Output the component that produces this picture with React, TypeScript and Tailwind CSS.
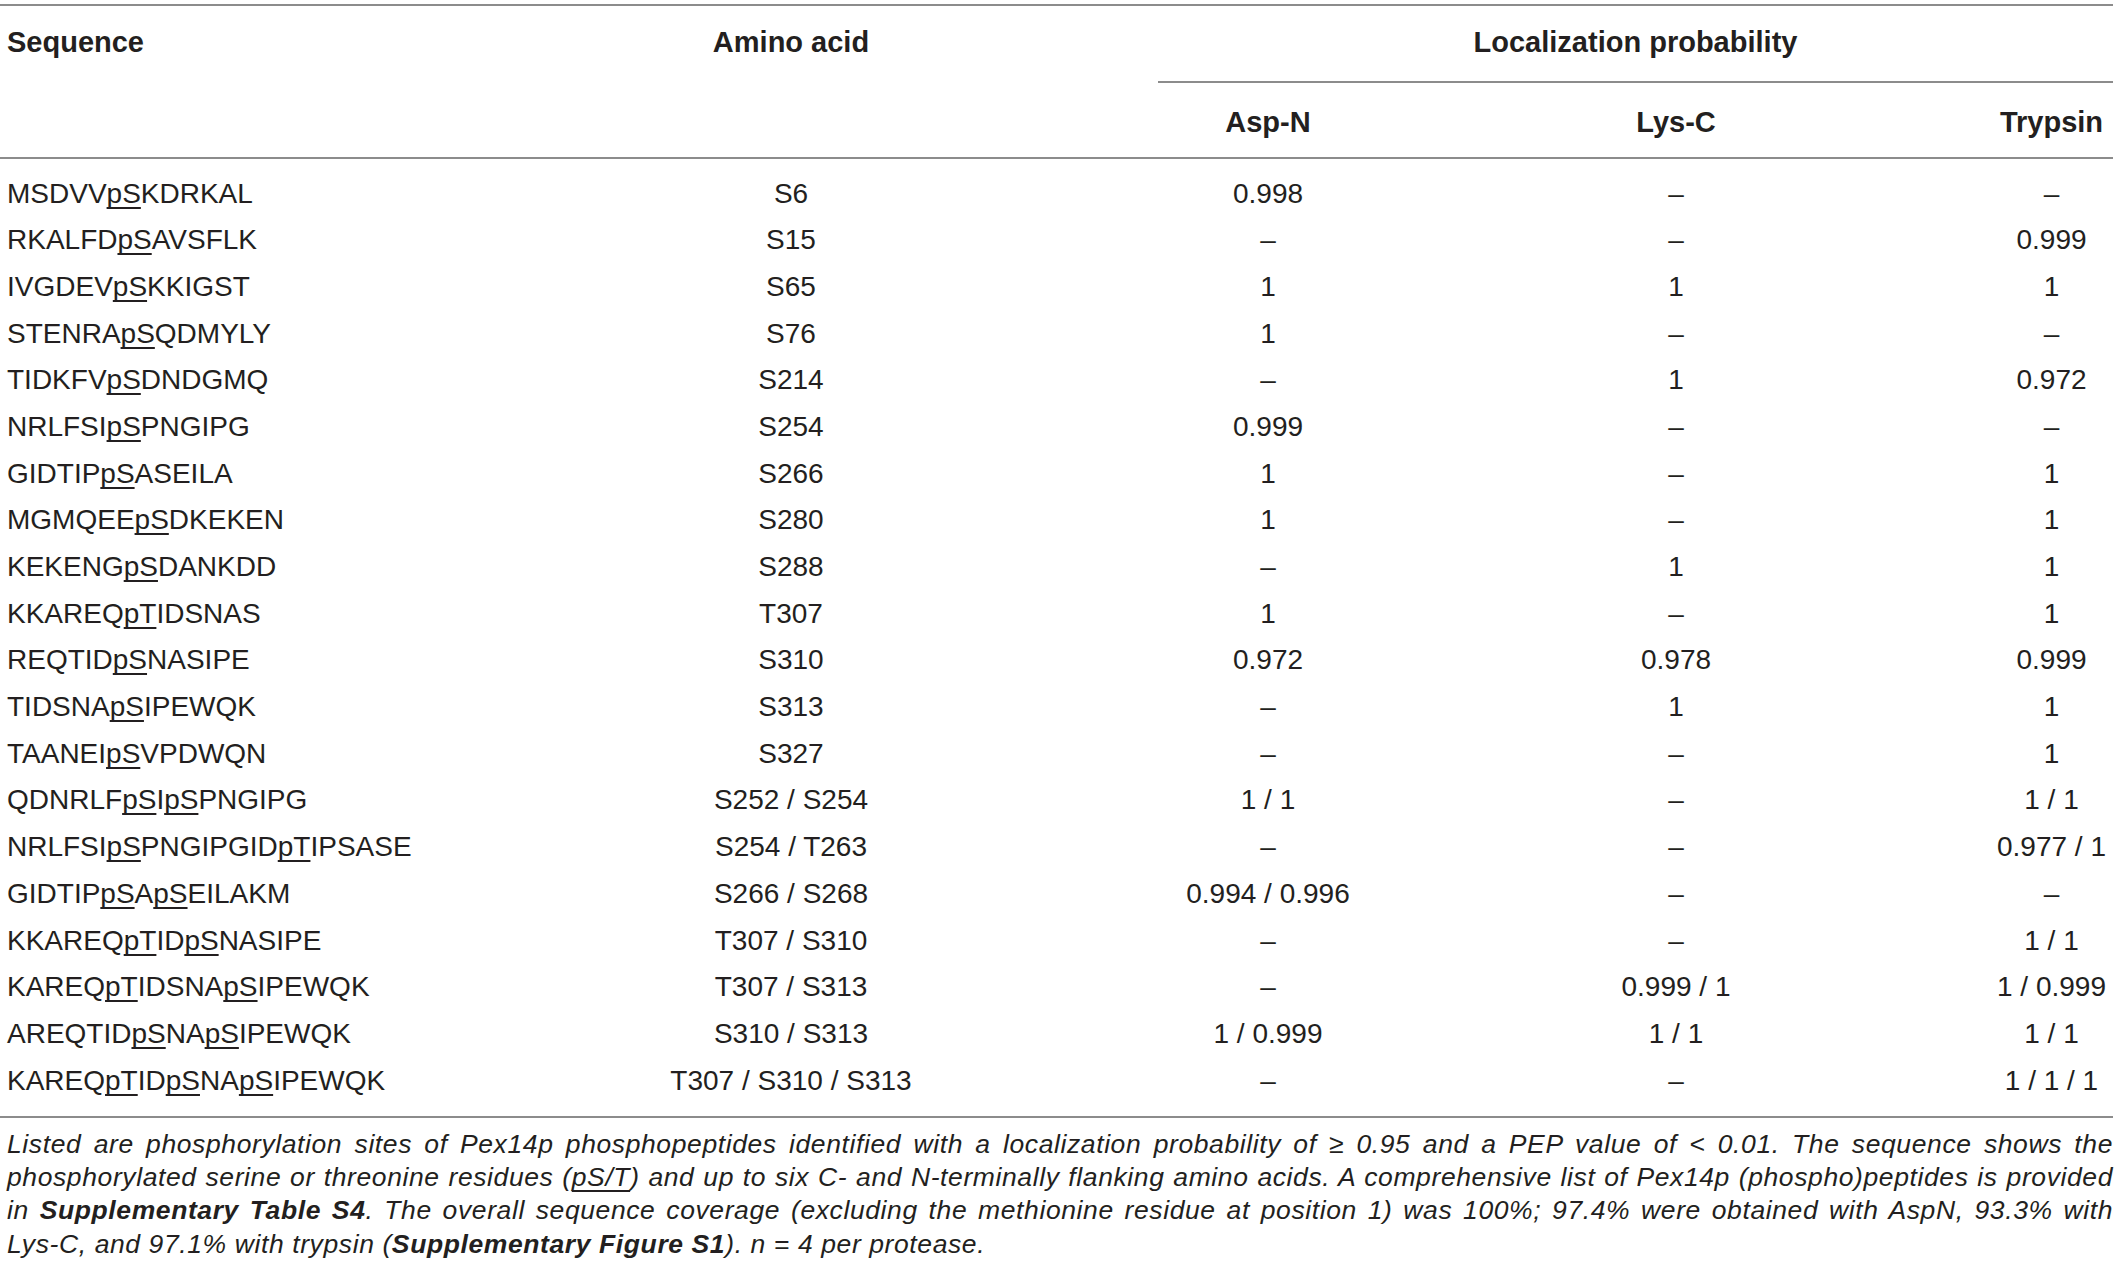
const rows: string[][] = [
  ["MSDVV[pS]KDRKAL", "S6", "0.998", "–", "–"],
  ["RKALFD[pS]AVSFLK", "S15", "–", "–", "0.999"],
  ["IVGDEV[pS]KKIGST", "S65", "1", "1", "1"],
  ["STENRA[pS]QDMYLY", "S76", "1", "–", "–"],
  ["TIDKFV[pS]DNDGMQ", "S214", "–", "1", "0.972"],
  ["NRLFSI[pS]PNGIPG", "S254", "0.999", "–", "–"],
  ["GIDTIP[pS]ASEILA", "S266", "1", "–", "1"],
  ["MGMQEE[pS]DKEKEN", "S280", "1", "–", "1"],
  ["KEKENG[pS]DANKDD", "S288", "–", "1", "1"],
  ["KKAREQ[pT]IDSNAS", "T307", "1", "–", "1"],
  ["REQTID[pS]NASIPE", "S310", "0.972", "0.978", "0.999"],
  ["TIDSNA[pS]IPEWQK", "S313", "–", "1", "1"],
  ["TAANEI[pS]VPDWQN", "S327", "–", "–", "1"],
  ["QDNRLF[pS]I[pS]PNGIPG", "S252 / S254", "1 / 1", "–", "1 / 1"],
  ["NRLFSI[pS]PNGIPGID[pT]IPSASE", "S254 / T263", "–", "–", "0.977 / 1"],
  ["GIDTIP[pS]A[pS]EILAKM", "S266 / S268", "0.994 / 0.996", "–", "–"],
  ["KKAREQ[pT]ID[pS]NASIPE", "T307 / S310", "–", "–", "1 / 1"],
  ["KAREQ[pT]IDSNA[pS]IPEWQK", "T307 / S313", "–", "0.999 / 1", "1 / 0.999"],
  ["AREQTID[pS]NA[pS]IPEWQK", "S310 / S313", "1 / 0.999", "1 / 1", "1 / 1"],
  ["KAREQ[pT]ID[pS]NA[pS]IPEWQK", "T307 / S310 / S313", "–", "–", "1 / 1 / 1"],
];

function Seq({ text }: { text: string }) {
  const parts = text.split(/(\[[^\]]+\])/).filter(Boolean);
  return (
    <>
      {parts.map((p, i) =>
        p.startsWith("[") ? (
          <span
            key={i}
            className="underline decoration-[1.5px] underline-offset-[4px] [text-decoration-skip-ink:none]"
          >
            {p.slice(1, -1)}
          </span>
        ) : (
          <span key={i}>{p}</span>
        )
      )}
    </>
  );
}

export default function App() {
  return (
    <div className="min-h-screen bg-white font-['Liberation_Sans',Arial,sans-serif] text-[#231f20]">
      <div className="w-[2113px] pt-[4px]">
        {/* header */}
        <div className="grid grid-cols-[408px_766px_188px_628px_123px] grid-rows-[77px_74px] border-y-2 border-[#8c8c8c] text-[29px] font-bold">
          <div className="flex items-center pb-[3px] pl-[7px]">Sequence</div>
          <div className="flex items-center justify-center pb-[3px]">Amino acid</div>
          <div className="col-span-3 -ml-[16px] flex items-center justify-center border-b-2 border-[#8c8c8c] pb-[1px]">
            Localization probability
          </div>
          <div className="col-start-3 flex items-center justify-center pt-[6px]">Asp-N</div>
          <div className="flex items-center justify-center pt-[6px]">Lys-C</div>
          <div className="flex items-center justify-center pt-[6px]">Trypsin</div>
        </div>

        {/* body */}
        <div className="border-b-2 border-[#8c8c8c] py-[11.5px] text-[28px]">
          {rows.map((r) => (
            <div
              key={r[0]}
              className="grid h-[46.7px] grid-cols-[408px_766px_188px_628px_123px] leading-[46.7px]"
            >
              <div className="whitespace-nowrap pl-[7px]">
                <Seq text={r[0]} />
              </div>
              <div className="whitespace-nowrap text-center">{r[1]}</div>
              <div className="whitespace-nowrap text-center">{r[2]}</div>
              <div className="whitespace-nowrap text-center">{r[3]}</div>
              <div className="whitespace-nowrap text-center">{r[4]}</div>
            </div>
          ))}
        </div>

        {/* caption */}
        <div className="mt-[10px] pl-[7px] text-[26.5px] italic leading-[33.3px] tracking-[0.6px]">
          <div className="whitespace-nowrap text-justify [text-align-last:justify]">
            Listed are phosphorylation sites of Pex14p phosphopeptides identified with a localization probability of ≥ 0.95 and a PEP value of &lt; 0.01. The sequence shows the
          </div>
          <div className="whitespace-nowrap text-justify [text-align-last:justify]">
            phosphorylated serine or threonine residues (
            <span className="underline decoration-[1.5px] underline-offset-[4px] [text-decoration-skip-ink:none]">pS/T</span>) and up to six C- and N-terminally flanking amino acids. A comprehensive list of Pex14p (phospho)peptides is provided
          </div>
          <div className="whitespace-nowrap text-justify [text-align-last:justify]">
            in <span className="font-bold">Supplementary Table S4</span>. The overall sequence coverage (excluding the methionine residue at position 1) was 100%; 97.4% were obtained with AspN, 93.3% with
          </div>
          <div className="whitespace-nowrap">
            Lys-C, and 97.1% with trypsin (<span className="font-bold">Supplementary Figure S1</span>). n = 4 per protease.
          </div>
        </div>
      </div>
    </div>
  );
}
